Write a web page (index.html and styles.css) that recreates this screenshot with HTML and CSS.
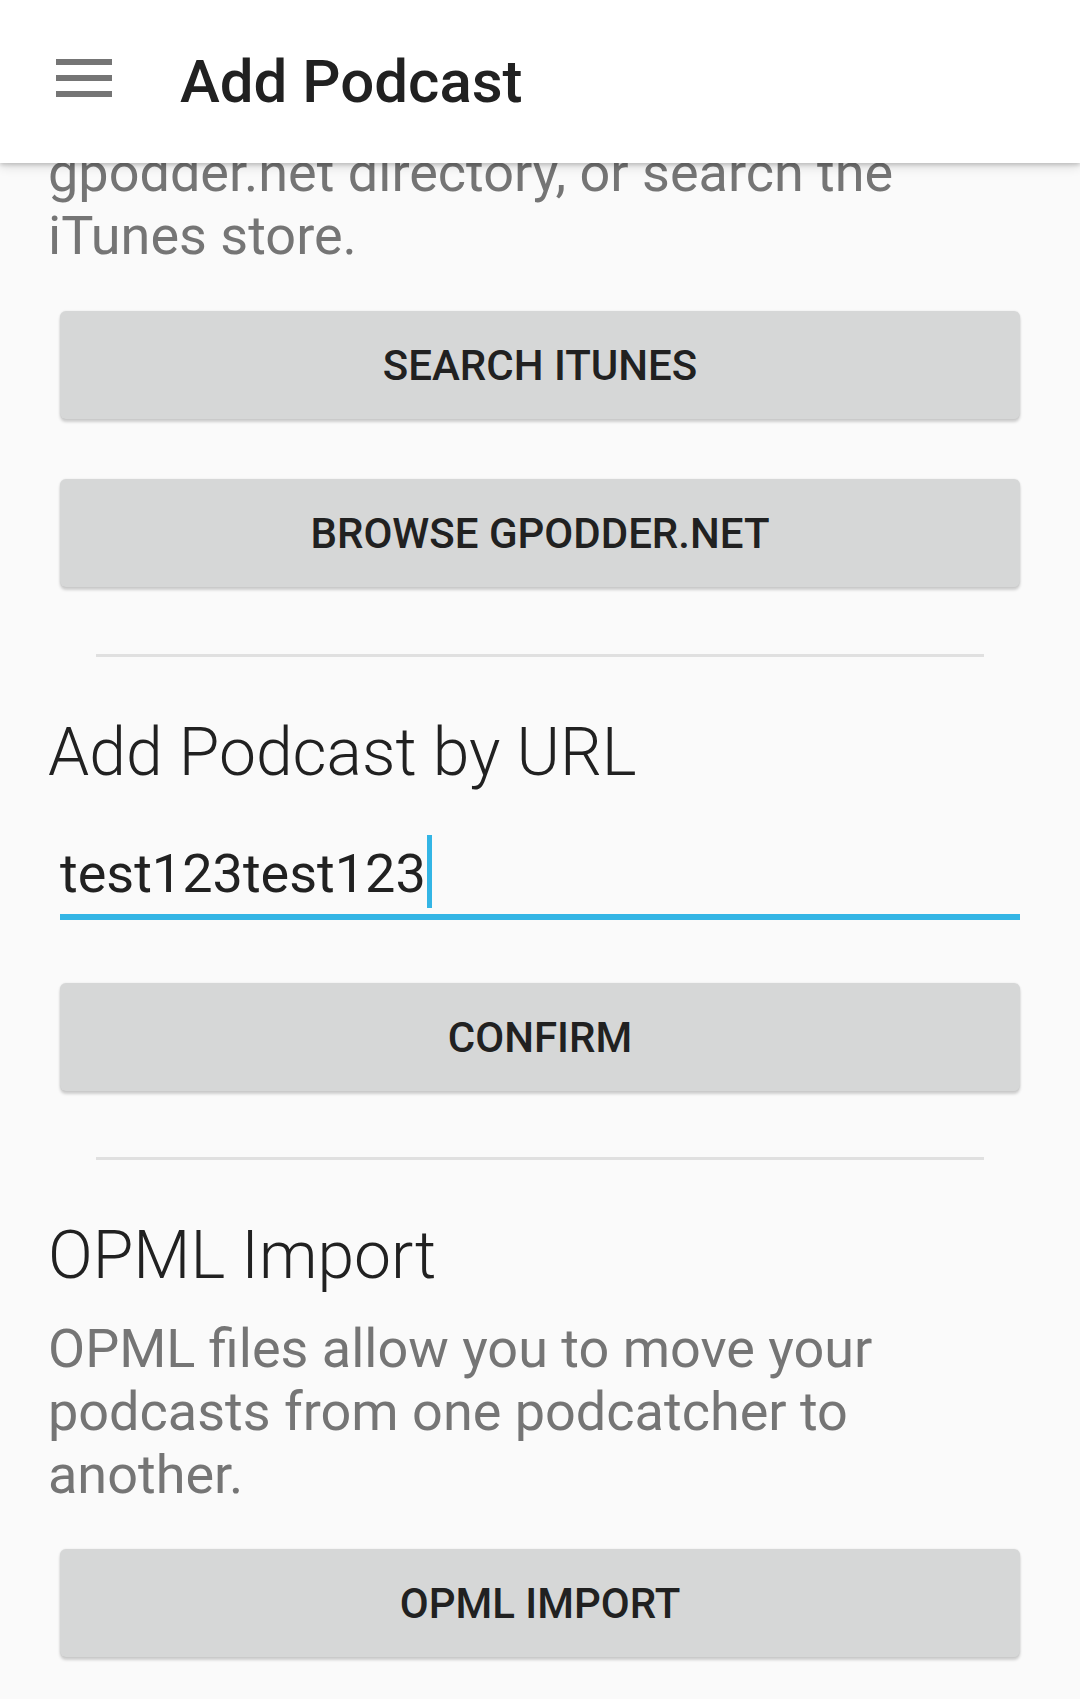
FILE: index.html
```html
<!DOCTYPE html>
<html lang="en">
<head>
<meta charset="utf-8">
<title>Add Podcast</title>
<link rel="stylesheet" href="styles.css">
</head>
<body>
<div class="screen">
  <header class="toolbar">
    <svg class="menu-icon" width="56" height="38" viewBox="0 0 56 38" aria-hidden="true">
      <rect x="0" y="0" width="56" height="6" fill="#757575"/>
      <rect x="0" y="16" width="56" height="6" fill="#757575"/>
      <rect x="0" y="32" width="56" height="6" fill="#757575"/>
    </svg>
    <h1 class="toolbar-title">Add Podcast</h1>
  </header>

  <div class="scroller">
    <main class="content">
      <p class="desc desc-top">gpodder.net directory, or search the iTunes store.</p>
      <div class="btn btn-first">SEARCH ITUNES</div>
      <div class="btn btn-second">BROWSE GPODDER.NET</div>
      <div class="divider"></div>

      <h2 class="section-title">Add Podcast by URL</h2>
      <div class="field">
        <span class="field-text">test123test123</span><span class="cursor"></span>
      </div>
      <div class="btn btn-confirm">CONFIRM</div>
      <div class="divider divider-second"></div>

      <h2 class="section-title">OPML Import</h2>
      <p class="desc desc-opml">OPML files allow you to move your podcasts from one podcatcher to another.</p>
      <div class="btn btn-opml">OPML IMPORT</div>
    </main>
  </div>
</div>
</body>
</html>
```

FILE: styles.css
```css
html, body {
  margin: 0;
  padding: 0;
}

body {
  background: #fafafa;
  font-family: Roboto, "Noto Sans", "Liberation Sans", sans-serif;
  color: #212121;
}

.screen {
  width: 1080px;
  height: 1699px;
  overflow: hidden;
  background: #fafafa;
  display: flex;
  flex-direction: column;
}

/* Toolbar: its shadow falls over the scrolled content */
.toolbar {
  position: relative;
  z-index: 2;
  flex: none;
  height: 163px;
  background: #ffffff;
  box-shadow: 0 2px 4px rgba(0, 0, 0, 0.16), 0 4px 10px rgba(0, 0, 0, 0.12);
  display: flex;
  align-items: flex-start;
  padding-left: 56px;
  box-sizing: border-box;
}

.menu-icon {
  display: block;
  margin-top: 59px;
  flex: none;
}

.toolbar-title {
  margin: 47px 0 0 68px;
  font-size: 60px;
  font-weight: 500;
  line-height: 70px;
  color: #212121;
}

/* Scrolled viewport below the toolbar */
.scroller {
  flex: 1;
  overflow: hidden;
}

.content {
  display: flex;
  flex-direction: column;
  padding: 0 48px;
  margin-top: -22px; /* current scroll offset */
}

.desc {
  margin: 0;
  font-size: 54px;
  line-height: 63px;
  font-weight: 400;
  color: #757575;
}

.desc-opml {
  margin-top: 23px;
}

.btn {
  height: 108px;
  margin: 0 12px;
  display: flex;
  align-items: center;
  justify-content: center;
  background: #d6d7d7;
  border-radius: 6px;
  box-shadow: 0 3px 3px rgba(0, 0, 0, 0.18), 0 0 2px rgba(0, 0, 0, 0.10);
  font-size: 42px;
  font-weight: 500;
  color: #212121;
}

.btn-first { margin-top: 44px; }
.btn-second { margin-top: 60px; }
.btn-confirm { margin-top: 63px; }
.btn-opml { margin-top: 43px; }

.divider {
  height: 3px;
  margin: 67px 48px 0;
  background: #e0e0e0;
}

.divider-second {
  margin-top: 66px;
}

.section-title {
  margin: 57px 0 0;
  font-size: 66px;
  line-height: 77px;
  font-weight: 300;
  color: #212121;
}

.field {
  margin: 44px 12px 0;
  display: flex;
  align-items: flex-start;
  padding-bottom: 6px;
  border-bottom: 6px solid #33b5e5;
}

.field-text {
  margin-top: 7px;
  font-size: 54px;
  line-height: 63px;
  color: #212121;
}

.cursor {
  width: 5px;
  height: 73px;
  margin-left: 1px;
  background: #33b5e5;
}
```
